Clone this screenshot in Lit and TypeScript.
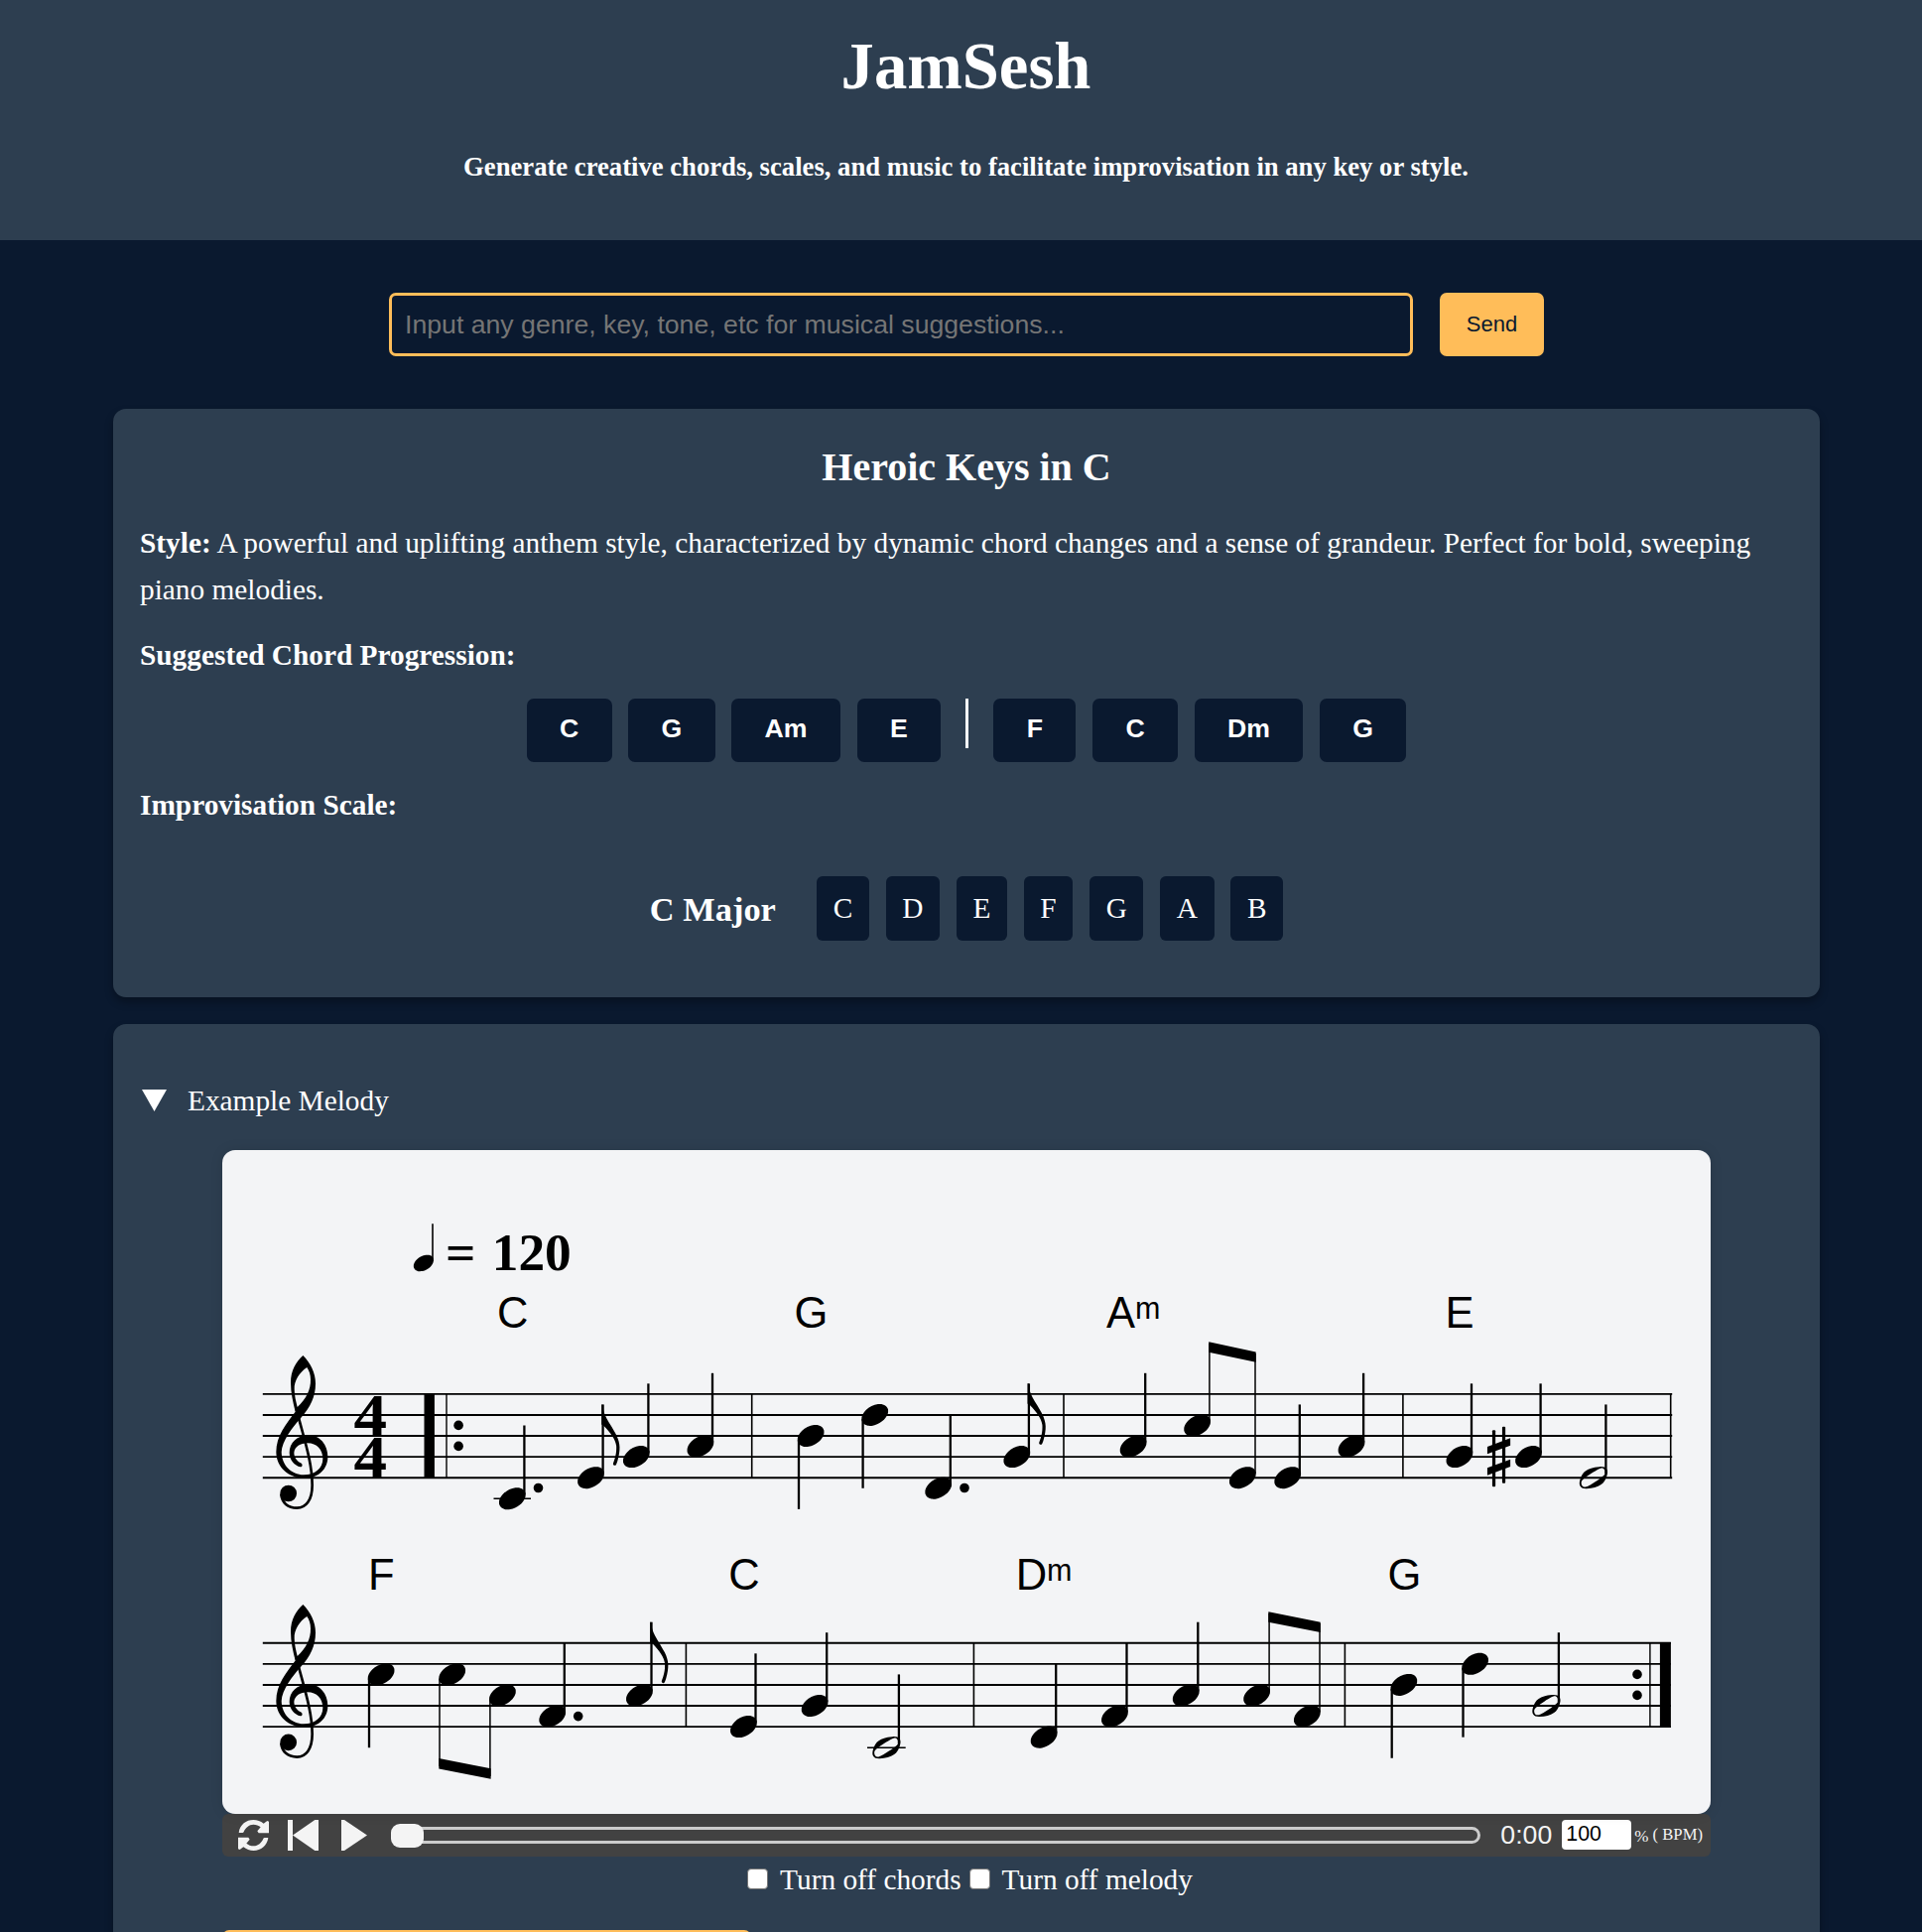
import { LitElement, html, svg, css } from "lit";
import { customElement } from "lit/decorators.js";

const HEAD =
  "M6.09 -4.05c0.36 -0.03 1.2 0 1.53 0.06c1.17 0.24 1.89 0.84 2.16 1.83c0.06 0.18 0.06 0.3 0.06 0.66c0 0.45 0 0.63 -0.15 1.08c-0.66 2.04 -3.06 3.93 -5.52 4.38c-0.54 0.09 -1.44 0.09 -1.83 0.03c-1.23 -0.27 -1.98 -0.87 -2.25 -1.86c-0.06 -0.18 -0.06 -0.3 -0.06 -0.66c0 -0.45 0 -0.63 0.15 -1.08c0.24 -0.78 0.75 -1.53 1.44 -2.22c1.2 -1.2 2.85 -2.01 4.47 -2.22z";
const HALF =
  "M7.44 -4.05c0.06 -0.03 0.27 -0.03 0.48 -0.03c1.05 0 1.71 0.24 2.1 0.81c0.42 0.6 0.45 1.35 0.18 2.4c-0.42 1.59 -1.14 2.73 -2.16 3.39c-1.41 0.93 -3.18 1.44 -5.4 1.53c-1.17 0.03 -1.89 -0.21 -2.28 -0.81c-0.42 -0.6 -0.45 -1.35 -0.18 -2.4c0.42 -1.59 1.14 -2.73 2.16 -3.39c0.63 -0.42 1.23 -0.72 1.98 -0.96c0.9 -0.3 1.65 -0.42 3.12 -0.54zm1.29 0.57c-0.27 -0.09 -0.63 -0.12 -0.9 -0.03c-0.72 0.24 -1.53 0.69 -3.27 1.8c-2.34 1.5 -3.45 2.4 -3.72 2.94c-0.36 0.72 -0.06 1.85 0.66 2.12c0.24 0.12 0.69 0.09 0.99 0c0.84 -0.3 1.92 -0.93 4.14 -2.37c1.62 -1.08 2.52 -1.86 2.76 -2.34c0.36 -0.72 0.06 -1.85 -0.66 -2.12z";
const FLAG =
  "M-0.42 3.75l0 -3.75l0.42 0l0 0.18c0 0.3 0.06 0.84 0.12 1.23c0.24 1.53 0.9 3.12 2.13 5.16l0.99 1.59c0.87 1.44 1.38 2.34 1.77 3.09c0.81 1.68 1.2 3.06 1.26 4.53c0.03 1.53 -0.21 3.27 -0.75 5.01c-0.21 0.69 -0.51 1.5 -0.6 1.59c-0.09 0.12 -0.27 0.21 -0.42 0.21c-0.15 0 -0.42 -0.12 -0.51 -0.21c-0.15 -0.18 -0.18 -0.42 -0.09 -0.66c0.15 -0.33 0.45 -1.2 0.57 -1.62c0.42 -1.38 0.6 -2.58 0.6 -3.9c0 -0.66 0 -0.81 -0.06 -1.11c-0.39 -2.07 -1.8 -4.26 -4.59 -7.14l-0.42 -0.45l-0.42 0z";
const CLEF =
  "M136 33C115 52 99 78 99 115C99 146 106 175 113 203C85 240 55 275 55 325C55 370 92 404 140 404C185 404 211 375 211 340C211 303 187 274 153 274C118 274 95 298 95 327C95 350 111 366 128 370C135 371 136 361 129 358C117 352 109 340 109 327C111 309 128 298 150 298C178 298 196 318 196 345C196 374 172 394 138 394C101 394 72 365 71 325C72 292 104 250 130 221C158 190 174 158 174 118C174 85 158 55 136 33ZM148 69C125 84 109 110 110 135C110 155 115 172 119 189C145 165 160 137 159 105C159 91 155 79 148 69Z";

/** Engraving scale: a staff space is 7.75 units. */
const SCALE = 2.72;
const STEP = 10.54;

type Dir = "up" | "down";
interface Note {
  x: number;
  pos: number; // half-spaces below the top staff line
  dir?: Dir;
  half?: boolean;
  flag?: boolean;
  beam?: number; // y at which a beamed stem ends
  stemX?: number;
}
interface Staff {
  top: number;
  right: number;
  notes: Note[];
  bars: number[];
  ledgers: [number, number][];
  dots: [number, number][];
  beams: [number, number, number, number][];
  chordY: number;
  chords: [string, number, number?][];
}

const STAVES: Staff[] = [
  {
    top: 1404.9,
    right: 1685.2,
    notes: [
      { x: 502.9, pos: 10 },
      { x: 582.1, pos: 8, flag: true },
      { x: 627.9, pos: 6 },
      { x: 692.5, pos: 5 },
      { x: 803.7, pos: 4, dir: "down" },
      { x: 868.3, pos: 2, dir: "down" },
      { x: 932.3, pos: 9 },
      { x: 1011.4, pos: 6, flag: true },
      { x: 1128.7, pos: 5 },
      { x: 1193.2, pos: 3, beam: 1354, stemX: 1218.9 },
      { x: 1238.9, pos: 8, beam: 1364, stemX: 1265 },
      { x: 1284.3, pos: 8 },
      { x: 1348.6, pos: 5 },
      { x: 1457.5, pos: 6 },
      { x: 1527.1, pos: 6 },
      { x: 1591.8, pos: 8, half: true },
    ],
    bars: [757.7, 1072, 1413.9, 1683.7],
    ledgers: [[497.5, 535]],
    dots: [[542.5, 1499.5], [972, 1499.5], [462.1, 1436.4], [462.1, 1457.4]],
    beams: [[1218.2, 1352.3, 1265.7, 1362.4]],
    chordY: 1338,
    chords: [["C", 501], ["G", 800.6], ["A", 1115, 1143.9], ["E", 1456.6]],
  },
  {
    top: 1655.8,
    right: 1683.9,
    notes: [
      { x: 370.7, pos: 3, dir: "down" },
      { x: 442.3, pos: 3, dir: "down", beam: 1780, stemX: 443 },
      { x: 493, pos: 5, dir: "down", beam: 1790, stemX: 493.9 },
      { x: 543.3, pos: 7 },
      { x: 631, pos: 5, flag: true },
      { x: 736, pos: 8 },
      { x: 807.7, pos: 6 },
      { x: 879.3, pos: 10, half: true },
      { x: 1038.7, pos: 9 },
      { x: 1110, pos: 7 },
      { x: 1181.8, pos: 5 },
      { x: 1253.2, pos: 5, beam: 1626, stemX: 1279.1 },
      { x: 1303.9, pos: 7, beam: 1636, stemX: 1330 },
      { x: 1401.4, pos: 4, dir: "down" },
      { x: 1473.2, pos: 2, dir: "down" },
      { x: 1544.3, pos: 6, half: true },
    ],
    bars: [691.4, 981.4, 1355.4],
    ledgers: [[874, 912.7]],
    dots: [[582.7, 1729.6], [1650, 1687.4], [1650, 1708.4]],
    beams: [[442.3, 1772, 494.6, 1782.3], [1278.3, 1624.3, 1330.7, 1634.7]],
    chordY: 1602,
    chords: [["F", 371], ["C", 734.2], ["D", 1023.8, 1055], ["G", 1398.4]],
  },
];

@customElement("sheet-music")
export class SheetMusic extends LitElement {
  static styles = css`
    :host { display: block; }
    svg { display: block; width: 100%; height: 100%; }
    .chord { font-family: "Liberation Sans", Arial, sans-serif; font-size: 43.5px; }
    .quality { font-size: 30.5px; }
    .tempo { font-family: "Liberation Serif", "Times New Roman", serif; font-size: 53.33px; font-weight: 700; word-spacing: 3px; }
    .meter { font-family: "Liberation Serif", "Times New Roman", serif; font-size: 61px; font-weight: 700; }
  `;

  private note(n: Note, top: number) {
    const y = top + n.pos * STEP;
    const down = n.dir === "down";
    const sx = n.stemX ?? n.x + (down ? 1.3 : n.half ? 26.6 : 25.5);
    const end = n.beam ?? y + (down ? 73.8 : -73.8);
    return svg`
      <path d=${n.half ? HALF : HEAD} fill-rule="evenodd" transform="translate(${n.x} ${y}) scale(${SCALE})"></path>
      <line x1=${sx} x2=${sx} y1=${y + (down ? 4 : -4)} y2=${end} stroke="#000" stroke-width=${n.beam ? 1.5 : 2.3}></line>
      ${n.flag ? svg`<path d=${FLAG} transform="translate(${sx - 0.2} ${end}) scale(${SCALE})"></path>` : null}
    `;
  }

  private staff(s: Staff) {
    const bottom = s.top + 8 * STEP;
    return svg`
      ${[0, 2, 4, 6, 8].map(
        (p) => svg`<line x1="264.8" x2=${s.right} y1=${s.top + p * STEP} y2=${s.top + p * STEP} stroke="#000" stroke-width="1.9"></line>`
      )}
      <g transform="translate(260 ${s.top - 49.9}) scale(0.33333)">
        <path d=${CLEF} fill-rule="evenodd"></path>
        <path d="M115 190C134 270 164 350 164 425C164 470 145 494 118 494C90 494 72 478 70 452" fill="none" stroke="#000" stroke-width="8"></path>
        <circle cx="92" cy="450" r="25"></circle>
      </g>
      ${s.bars.map((x) => svg`<line x1=${x} x2=${x} y1=${s.top} y2=${bottom} stroke="#000" stroke-width="1.6"></line>`)}
      ${s.ledgers.map(([a, b]) => svg`<line x1=${a} x2=${b} y1=${s.top + 10 * STEP} y2=${s.top + 10 * STEP} stroke="#000" stroke-width="1.6"></line>`)}
      ${s.dots.map(([x, y]) => svg`<circle cx=${x} cy=${y} r="4.8"></circle>`)}
      ${s.notes.map((n) => this.note(n, s.top))}
      ${s.beams.map(([x1, y1, x2, y2]) => svg`<polygon points="${x1},${y1} ${x2},${y2} ${x2},${y2 + 10.4} ${x1},${y1 + 10.4}"></polygon>`)}
      ${s.chords.map(
        ([root, x, mx]) => svg`
          <text class="chord" x=${x} y=${s.chordY}>${root}</text>
          ${mx ? svg`<text class="chord quality" x=${mx} y=${s.chordY - 9.3}>m</text>` : null}`
      )}
    `;
  }

  render() {
    return html`
      <svg viewBox="224 1159 1500 669">
        <path d=${HEAD} transform="translate(416.8 1273) scale(2.04)"></path>
        <line x1="436" x2="436" y1="1233.3" y2="1271" stroke="#000" stroke-width="1.6"></line>
        <text class="tempo" x="449" y="1279.7">= 120</text>
        ${STAVES.map((s) => this.staff(s))}
        <text class="meter" transform="translate(356.5 1447) scale(1.1 1)">4</text>
        <text class="meter" transform="translate(356.5 1489) scale(1.1 1)">4</text>
        <rect x="427.5" y="1404" width="10.4" height="86"></rect>
        <rect x="449.3" y="1404" width="1.4" height="86"></rect>
        <rect x="1662.2" y="1655" width="1.4" height="86"></rect>
        <rect x="1672.9" y="1655" width="11" height="86"></rect>
        <g transform="translate(1180 1280) scale(0.35714 0.33333)">
          <rect x="907" y="484" width="9" height="171" rx="3"></rect>
          <rect x="935" y="473" width="9" height="171" rx="3"></rect>
          <polygon points="893,534 958,508 958,530 893,556"></polygon>
          <polygon points="893,598 958,572 958,594 893,620"></polygon>
        </g>
      </svg>
    `;
  }
}

@customElement("midi-player")
export class MidiPlayer extends LitElement {
  static styles = css`
    :host {
      display: flex;
      align-items: center;
      height: 43px;
      box-sizing: border-box;
      padding: 0 8px 0 16px;
      background: #424242;
      border-radius: 6px;
      color: #f4f4f4;
      font-family: "Liberation Serif", "Times New Roman", serif;
    }
    svg { display: block; width: 31px; height: 31px; fill: #f4f4f4; margin-right: 19px; }
    .play { margin-right: 23px; }
    .track {
      flex: 1;
      height: 17px;
      box-sizing: border-box;
      border: 3px solid #cccccc;
      border-radius: 9px;
      display: flex;
      align-items: center;
    }
    .thumb { width: 33px; height: 24px; margin-left: -3px; flex: none; border-radius: 9px; background: #f4f4f4; }
    .clock { font: 26.67px/30px "Liberation Sans", Arial, sans-serif; margin-left: 20px; width: 62px; margin-top: -1px; }
    .tempo {
      width: 70px;
      height: 30px;
      box-sizing: border-box;
      border-radius: 4px;
      background: #fff;
      color: #000;
      padding: 1px 4px;
      margin-top: -1px;
      font: 21.33px/26px "Liberation Sans", Arial, sans-serif;
    }
    .percent { font-size: 17px; margin-left: 3px; padding-top: 3px; width: 18.2px; }
    .unit { font-size: 16.67px; white-space: nowrap; }
  `;

  render() {
    const arrow =
      "M2 38C6 14 24 0 46 0C58 0 68 4 77 11L88 3L93 5V40H62L58 34L68 22C62 17 55 14 46 14C33 14 22 24 17 36Q16 39 13 39H4Z";
    return html`
      <svg viewBox="0 0 93 93"><path d=${arrow}></path><path d=${arrow} transform="rotate(180 46.5 46.5)"></path></svg>
      <svg viewBox="0 0 93 93"><path d="M0 0H15V93H0ZM15 46.5L82 0H93V93H82Z"></path></svg>
      <svg class="play" viewBox="0 0 93 93"><path d="M12 0H21L90 46.5L21 93H12Z"></path></svg>
      <div class="track"><div class="thumb"></div></div>
      <span class="clock">0:00</span>
      <span class="tempo">100</span>
      <span class="percent">%</span>
      <span class="unit">( BPM)</span>
    `;
  }
}

@customElement("app-root")
export class AppRoot extends LitElement {
  static styles = css`
    :host {
      display: block;
      height: 1947px;
      overflow: hidden;
      background: #0a192f;
      color: #fff;
      font: 29.33px/46.93px "Liberation Serif", "Times New Roman", serif;
    }
    h1, h2, h3, p { margin: 0; }
    header {
      height: 242px;
      box-sizing: border-box;
      padding: 28px 0 0 10px;
      background: #2d3e50;
      text-align: center;
    }
    h1 { font-size: 66.67px; line-height: 77px; }
    .tagline { margin-top: 42px; font-size: 26.67px; line-height: 42.67px; font-weight: 700; }
    main { padding: 53px 103px 0 114px; display: flex; flex-direction: column; }
    .prompt { display: flex; gap: 27px; justify-content: center; }
    .field {
      width: 1032px;
      height: 64px;
      box-sizing: border-box;
      border: 3px solid #ffbd59;
      border-radius: 7px;
      padding: 0 13px;
      font: 26.67px/58px "Liberation Sans", Arial, sans-serif;
      color: #757575;
    }
    .send {
      width: 105px;
      border-radius: 7px;
      background: #ffbd59;
      color: #0a192f;
      text-align: center;
      font: 22px/64px "Liberation Sans", Arial, sans-serif;
    }
    .card {
      background: #2d3e50;
      border-radius: 13px;
      box-shadow: 0 5px 8px rgba(0, 0, 0, 0.3);
      padding: 27px 27px 0;
      box-sizing: border-box;
    }
    .suggestion { margin-top: 53px; height: 593px; }
    .suggestion h2 { font-size: 40px; line-height: 64px; text-align: center; margin-bottom: 20.8px; }
    .label { margin-top: 19.8px; font-weight: 700; }
    .chords { display: flex; justify-content: center; gap: 16.67px; margin: 19.6px 0 .9px; height: 64px; }
    .chord {
      background: #0a192f;
      border-radius: 7px;
      padding: 0 33.33px;
      font: 700 26.67px/61px "Liberation Sans", Arial, sans-serif;
    }
    .bar { width: 3px; height: 49.5px; background: #fff; margin: 0 8.6px; }
    .scale { display: flex; justify-content: center; align-items: center; gap: 16.67px; margin-top: 48.4px; }
    .scale h3 { font-size: 34.4px; margin-right: 24.6px; padding-top: 1px; }
    .tone { background: #0a192f; border-radius: 6px; padding: 0 16.67px; line-height: 65px; }
    .melody { margin-top: 27px; height: 1000px; padding-top: 53.5px; }
    .summary { display: flex; align-items: center; }
    .summary svg { width: 25px; height: 22px; margin: 0 21px 0 2px; fill: #fff; }
    .player { margin: 26.6px 83px 0; }
    .sheet {
      position: relative;
      z-index: 1;
      height: 669px;
      background: #f3f4f6;
      border-radius: 13px;
      box-shadow: 0 0 13px rgba(0, 0, 0, 0.1);
      overflow: hidden;
    }
    .toggles { display: flex; justify-content: center; align-items: center; padding-left: 7px; }
    .box {
      width: 21px;
      height: 21px;
      box-sizing: border-box;
      border: 1.5px solid #767676;
      border-radius: 4px;
      background: #fff;
      margin: -3px 12px 0 0;
    }
    .toggles .box:nth-of-type(3) { margin-left: 8px; }
    .download { width: 533px; height: 64px; margin-top: 27px; border-radius: 7px; background: #ffbd59; }
  `;

  private first = ["C", "G", "Am", "E"];
  private second = ["F", "C", "Dm", "G"];
  private tones = ["C", "D", "E", "F", "G", "A", "B"];

  render() {
    return html`
      <header>
        <h1>JamSesh</h1>
        <p class="tagline">Generate creative chords, scales, and music to facilitate improvisation in any key or style.</p>
      </header>
      <main>
        <div class="prompt">
          <div class="field">Input any genre, key, tone, etc for musical suggestions...</div>
          <div class="send">Send</div>
        </div>
        <section class="card suggestion">
          <h2>Heroic Keys in C</h2>
          <p><b>Style:</b> A powerful and uplifting anthem style, characterized by dynamic chord changes and a sense of grandeur. Perfect for bold, sweeping piano melodies.</p>
          <p class="label">Suggested Chord Progression:</p>
          <div class="chords">
            ${this.first.map((c) => html`<div class="chord">${c}</div>`)}
            <div class="bar"></div>
            ${this.second.map((c) => html`<div class="chord">${c}</div>`)}
          </div>
          <p class="label">Improvisation Scale:</p>
          <div class="scale">
            <h3>C Major</h3>
            ${this.tones.map((t) => html`<div class="tone">${t}</div>`)}
          </div>
        </section>
        <section class="card melody">
          <div class="summary">
            <svg viewBox="0 0 25 22"><polygon points="0,0 25,0 12.5,22"></polygon></svg>
            <span>Example Melody</span>
          </div>
          <div class="player">
            <sheet-music class="sheet"></sheet-music>
            <midi-player></midi-player>
            <div class="toggles">
              <span class="box"></span><span>Turn off chords</span>
              <span class="box"></span><span>Turn off melody</span>
            </div>
            <div class="download"></div>
          </div>
        </section>
      </main>
    `;
  }
}
